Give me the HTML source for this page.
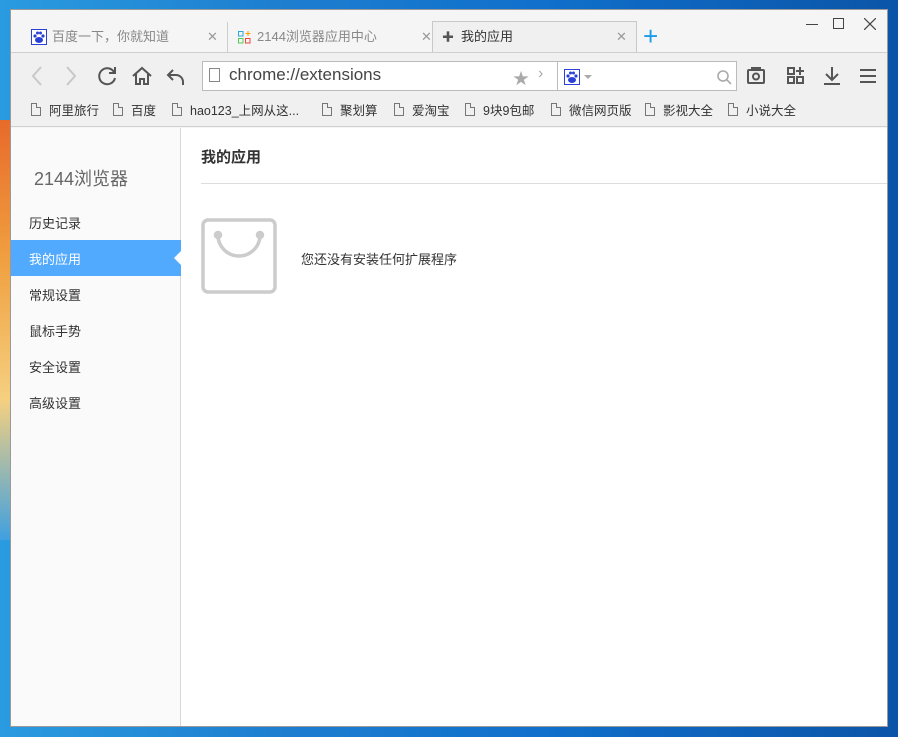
<!DOCTYPE html>
<html><head><meta charset="utf-8"><style>
*{margin:0;padding:0;box-sizing:border-box}
body{width:898px;height:737px;overflow:hidden;position:relative;font-family:"Liberation Sans","Noto Sans CJK SC",sans-serif;
background:linear-gradient(90deg,#2a9be0 0%,#1e7fd0 30%,#1070cc 60%,#0b55a8 100%);}
.lstrip{position:absolute;left:0;top:120px;width:10px;height:420px;background:linear-gradient(180deg,#e86a2a,#f0a040,#f5d080,#40a0e0)}
.win{position:absolute;left:10px;top:9px;width:878px;height:718px;background:#f5f5f5;border:1px solid #9a9a9a;overflow:hidden}
.abs{position:absolute}
.tab{position:absolute;top:11px;height:32px;font-size:13px;color:#888;line-height:32px}
.x{position:absolute;font-size:13px;color:#999;top:0;font-weight:300}
.tb{position:absolute;left:0;top:42px;width:878px;height:75px;background:#f0f0f0;border-top:1px solid #cfcfcf;border-bottom:1px solid #d0d0d0}
.bm{position:absolute;top:47px;font-size:12.5px;color:#333;display:flex;align-items:center}
.doc{display:inline-block;width:10px;height:13px;border:1px solid #777;margin-right:8px;position:relative;border-top-right-radius:0}
.doc:after{content:"";position:absolute;right:-1px;top:-1px;width:4px;height:4px;background:#f0f0f0;border-left:1px solid #777;border-bottom:1px solid #777}
.side{position:absolute;left:0;top:118px;width:170px;height:600px;background:#fafafa;border-right:1px solid #d8d8d8}
.si{position:absolute;left:18px;font-size:13px;color:#333}
</style></head><body>
<div class="lstrip"></div>
<div class="win">
 <div class="tab" style="left:20px;width:196px">
  <svg class="abs" style="left:0;top:8px" width="16" height="16"><rect x="0.5" y="0.5" width="15" height="15" fill="#fff" stroke="#2a3fd6"/><ellipse cx="8" cy="11" rx="4" ry="3" fill="#2a3fd6"/><circle cx="4" cy="7" r="1.6" fill="#2a3fd6"/><circle cx="12" cy="7" r="1.6" fill="#2a3fd6"/><circle cx="6.5" cy="4" r="1.5" fill="#2a3fd6"/><circle cx="9.5" cy="4" r="1.5" fill="#2a3fd6"/></svg>
  <span class="abs" style="left:21px">百度一下，你就知道</span><span class="x" style="left:176px">✕</span></div>
 <div class="abs" style="left:216px;top:12px;width:1px;height:30px;background:#ccc"></div>
 <div class="tab" style="left:227px;width:196px">
  <svg class="abs" style="left:0;top:10px" width="13" height="13"><rect x="0.5" y="0.5" width="4.5" height="4.5" fill="none" stroke="#29a8e0"/><path d="M10 0v5M7.5 2.5h5" stroke="#f5a000"/><rect x="0.5" y="7.5" width="4.5" height="4.5" fill="none" stroke="#5c5"/><rect x="7.5" y="7.5" width="4.5" height="4.5" fill="none" stroke="#e44"/></svg>
  <span class="abs" style="left:19px">2144浏览器应用中心</span><span class="x" style="left:183px">✕</span></div>
 <div class="abs" style="left:421px;top:11px;width:205px;height:33px;background:#f0f0f0;border:1px solid #c8c8c8;border-bottom:none"></div>
 <div class="tab" style="left:431px;width:190px;color:#333">
  <span class="abs" style="left:0;top:0;color:#555;font-size:12px">✚</span>
  <span class="abs" style="left:19px">我的应用</span><span class="x" style="left:174px">✕</span></div>
 <div class="abs" style="left:632px;top:13px;font-size:26px;color:#1a9be8;line-height:26px">+</div>
 <div class="abs" style="left:795px;top:14px;width:12px;height:1px;background:#444"></div>
 <div class="abs" style="left:822px;top:8px;width:11px;height:11px;border:1px solid #444"></div>
 <svg class="abs" style="left:853px;top:8px" width="12" height="12" stroke="#444" stroke-width="1.2"><path d="M0 0l12 12M12 0L0 12"/></svg>
 <div class="tb">
  <svg class="abs" style="left:16px;top:11px" width="160" height="24" fill="none" stroke-width="2">
   <path d="M14 3L6 12l8 9" stroke="#c8c8c8"/><path d="M40 3l8 9-8 9" stroke="#c8c8c8"/>
   <path d="M87 8a8 8 0 1 0 1 6" stroke="#555"/><path d="M88 3v6h-6" stroke="#555"/>
   <path d="M106 12l9-8 9 8M109 10v10h4v-5h4v5h4V10" stroke="#555"/>
   <path d="M146 6l-5 5 5 5M141 11h8a7 7 0 0 1 7 7v3" stroke="#555"/>
  </svg>
  <div class="abs" style="left:191px;top:8px;width:356px;height:30px;background:#fff;border:1px solid #bbb"></div>
  <div class="abs" style="left:198px;top:15px;width:11px;height:14px;border:1px solid #888"></div>
  <div class="abs" style="left:218px;top:12px;font-size:17px;color:#444">chrome://extensions</div>
  <div class="abs" style="left:502px;top:12px;font-size:16px;color:#aaa">★</div>
  <div class="abs" style="left:527px;top:12px;font-size:16px;color:#aaa">›</div>
  <div class="abs" style="left:546px;top:8px;width:180px;height:30px;background:#fff;border:1px solid #bbb"></div>
  <svg class="abs" style="left:553px;top:16px" width="16" height="16"><rect x="0.5" y="0.5" width="15" height="15" fill="#fff" stroke="#2a3fd6"/><ellipse cx="8" cy="11" rx="4" ry="3" fill="#2a3fd6"/><circle cx="4" cy="7" r="1.6" fill="#2a3fd6"/><circle cx="12" cy="7" r="1.6" fill="#2a3fd6"/><circle cx="6.5" cy="4" r="1.5" fill="#2a3fd6"/><circle cx="9.5" cy="4" r="1.5" fill="#2a3fd6"/></svg>
  <div class="abs" style="left:573px;top:22px;border:4px solid transparent;border-top-color:#aaa"></div>
  <svg class="abs" style="left:705px;top:16px" width="16" height="16" fill="none" stroke="#aaa" stroke-width="1.6"><circle cx="7" cy="7" r="5"/><path d="M11 11l4 4"/></svg>
  <svg class="abs" style="left:735px;top:12px" width="140" height="22" fill="none" stroke="#555" stroke-width="2">
   <rect x="2" y="5" width="16" height="13" rx="1"/><path d="M6 5V3h8v2"/><circle cx="10" cy="11.5" r="3"/>
   <rect x="42" y="3" width="6" height="6"/><rect x="42" y="12" width="6" height="6"/><rect x="51" y="12" width="6" height="6"/><path d="M54 2v8M50 6h8"/>
   <path d="M86 2v12M80 9l6 6 6-6M78 19h16"/>
   <path d="M114 5h16M114 11h16M114 17h16"/>
  </svg>
  <div class="bm" style="left:20px"><span class="doc"></span>阿里旅行</div>
  <div class="bm" style="left:102px"><span class="doc"></span>百度</div>
  <div class="bm" style="left:161px"><span class="doc"></span>hao123_上网从这...</div>
  <div class="bm" style="left:311px"><span class="doc"></span>聚划算</div>
  <div class="bm" style="left:383px"><span class="doc"></span>爱淘宝</div>
  <div class="bm" style="left:454px"><span class="doc"></span>9块9包邮</div>
  <div class="bm" style="left:540px"><span class="doc"></span>微信网页版</div>
  <div class="bm" style="left:634px"><span class="doc"></span>影视大全</div>
  <div class="bm" style="left:717px"><span class="doc"></span>小说大全</div>
 </div>
 <div class="abs" style="left:0;top:118px;width:878px;height:600px;background:#fff"></div>
 <div class="side">
  <div class="si" style="left:23px;top:37px;font-size:18px;color:#666">2144浏览器</div>
  <div class="si" style="top:85px">历史记录</div>
  <div class="abs" style="left:0;top:112px;width:170px;height:36px;background:#52aaff"></div>
  <div class="abs" style="left:163px;top:122px;border:8px solid transparent;border-right-color:#fff;border-left:none"></div>
  <div class="si" style="top:121px;color:#fff">我的应用</div>
  <div class="si" style="top:157px">常规设置</div>
  <div class="si" style="top:193px">鼠标手势</div>
  <div class="si" style="top:229px">安全设置</div>
  <div class="si" style="top:265px">高级设置</div>
 </div>
 <div class="abs" style="left:190px;top:136px;font-size:15px;font-weight:bold;color:#333">我的应用</div>
 <div class="abs" style="left:190px;top:173px;width:688px;height:1px;background:#ddd"></div>
 <svg class="abs" style="left:190px;top:208px" width="78" height="78" fill="none" stroke="#ccc" stroke-width="3.5"><rect x="2" y="2" width="72" height="72" rx="5"/><path d="M17 17a21 21 0 0 0 42 0" stroke-linecap="round"/><circle cx="17" cy="17" r="2.5" fill="#ccc"/><circle cx="59" cy="17" r="2.5" fill="#ccc"/></svg>
 <div class="abs" style="left:290px;top:239px;font-size:13px;color:#333">您还没有安装任何扩展程序</div>
</div>
</body></html>
